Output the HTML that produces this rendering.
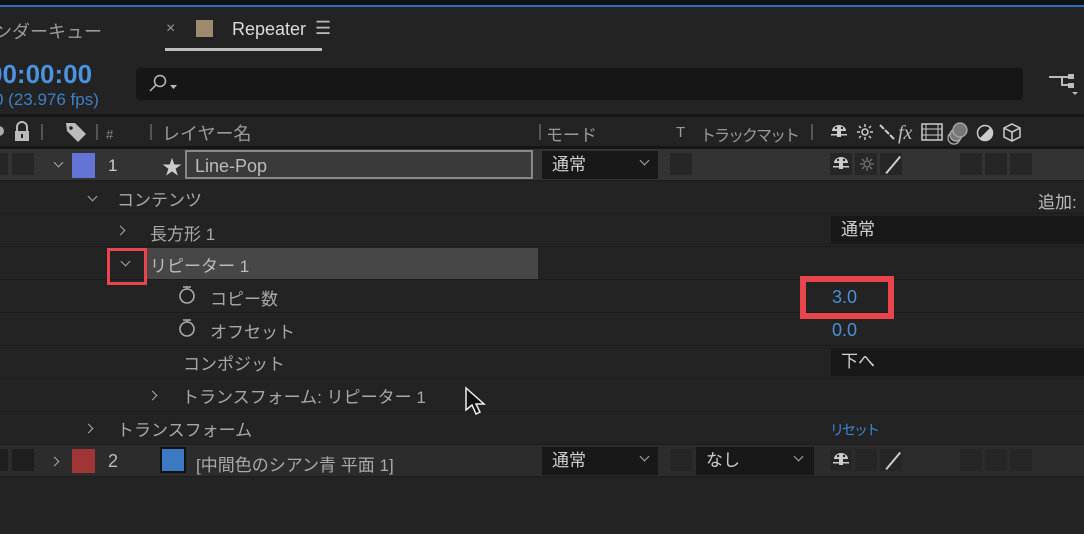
<!DOCTYPE html>
<html><head><meta charset="utf-8"><style>
*{margin:0;padding:0;box-sizing:border-box}
body{width:1084px;height:534px;background:#232323;overflow:hidden;position:relative;font-family:"Liberation Sans","Noto Sans CJK JP",sans-serif;color:#a8a8a8;font-size:17px}
.a{position:absolute}
.row{position:absolute;left:0;width:1084px;height:33px;border-bottom:1px solid #1c1c1c}
.t{position:absolute;white-space:nowrap}
.sq{position:absolute;background:#262626;width:22px;height:22px}
.dd{position:absolute;background:#181818;height:28px;color:#d0d0d0;padding-left:10px;line-height:28px;font-size:17px}
.ch{position:absolute;width:7px;height:7px;border-right:1.5px solid #aaa;border-bottom:1.5px solid #aaa}
.sep{position:absolute;top:124px;width:2px;height:16px;background:#555}
</style></head><body>
<svg width="0" height="0" style="position:absolute"><defs>
<g id="sh"><path d="M3 9a7 6 0 0114 0z" fill="#ccc"/><rect x="8" y="9" width="4" height="6" fill="#ccc"/><rect x="2" y="12" width="16" height="1.5" fill="#ccc"/><circle cx="7" cy="6" r="1.2" fill="#232323"/><circle cx="13" cy="6" r="1.2" fill="#232323"/></g>
<g id="sw"><circle cx="9" cy="11" r="7" fill="none" stroke="#aaa" stroke-width="1.6"/><path d="M5 2h8M9 2v2" stroke="#aaa" stroke-width="1.6"/></g>
</defs></svg>
<div class="a" style="left:0;top:0;width:1084px;height:6px;background:#111"></div>
<div class="a" style="left:0;top:5px;width:1084px;height:2px;background:#2d6fc0"></div>
<div class="t" style="left:-6px;top:18px;font-size:18px;color:#9a9a9a">ンダーキュー</div>
<div class="t" style="left:166px;top:20px;font-size:16px;color:#999">×</div>
<div class="a" style="left:196px;top:20px;width:17px;height:17px;background:#9c8b6c"></div>
<div class="t" style="left:232px;top:19px;font-size:18px;color:#dcdcdc">Repeater</div>
<div class="t" style="left:315px;top:18px;font-size:18px;color:#bbb">☰</div>
<div class="a" style="left:165px;top:48px;width:157px;height:3px;background:#bdbdbd"></div>
<div class="t" style="left:-12px;top:59px;font-size:26px;font-weight:bold;color:#4b92e0">00:00:00</div>
<div class="t" style="left:-6px;top:90px;font-size:17px;color:#3f7fc4">0 (23.976 fps)</div>
<div class="a" style="left:136px;top:68px;width:887px;height:32px;background:#161616;border-radius:4px"></div>
<svg class="a" style="left:146px;top:72px" width="36" height="24"><circle cx="14" cy="9" r="5.5" fill="none" stroke="#bbb" stroke-width="1.5"/><line x1="10" y1="13" x2="4" y2="19" stroke="#bbb" stroke-width="1.5"/><path d="M24 13h7l-3.5 4z" fill="#bbb"/></svg>
<svg class="a" style="left:1048px;top:72px" width="34" height="26"><path d="M1 5h10M11 5h3v8h6M14 5h6" stroke="#bbb" stroke-width="2" fill="none"/><rect x="20" y="2" width="6" height="5" fill="#bbb"/><rect x="20" y="11" width="6" height="5" fill="#bbb"/><path d="M24 20h6l-3 3z" fill="#bbb"/></svg>
<div class="a" style="left:0;top:114px;width:1084px;height:3px;background:#151515"></div>
<div class="a" style="left:0;top:146px;width:1084px;height:3px;background:#151515"></div>
<div class="a" style="left:-6px;top:126px;width:10px;height:10px;border-radius:50%;background:#aaa"></div>
<svg class="a" style="left:12px;top:121px" width="20" height="22"><path d="M5 10V6a5 5 0 0110 0v4" stroke="#bbb" stroke-width="2" fill="none"/><rect x="3" y="10" width="14" height="10" fill="#bbb"/><rect x="9" y="13" width="2" height="4" fill="#232323"/></svg>
<div class="sep" style="left:41px"></div>
<svg class="a" style="left:64px;top:120px" width="24" height="24"><path d="M2 3h9l11 11-8 8L3 11z" fill="#bbb"/><circle cx="7" cy="8" r="1.8" fill="#232323"/></svg>
<div class="sep" style="left:96px"></div>
<div class="t" style="left:106px;top:127px;font-size:13px;color:#888">#</div>
<div class="sep" style="left:150px"></div>
<div class="t" style="left:162px;top:120px;font-size:18px;color:#9a9a9a">レイヤー名</div>
<div class="sep" style="left:539px"></div>
<div class="t" style="left:546px;top:121px;font-size:17px;color:#999">モード</div>
<div class="t" style="left:676px;top:124px;font-size:15px;color:#999">T</div>
<div class="t" style="left:700px;top:122px;font-size:16px;color:#999;letter-spacing:-2px">トラックマット</div>
<div class="sep" style="left:811px"></div>
<svg class="a" style="left:826px;top:120px" width="210" height="26">
<use href="#sh" x="3" y="2"/>
<g stroke="#ccc" stroke-width="1.5" fill="none"><circle cx="39" cy="12" r="3"/><path d="M39 4v3M39 17v3M31 12h3M44 12h3M33 6l2 2M43 16l2 2M33 18l2-2M43 8l2-2"/></g>
<path d="M54 5l4 4M59 10l4 4M64 15l4 4" stroke="#ccc" stroke-width="2"/>
<text x="72" y="19" font-family="Liberation Serif" font-style="italic" font-size="20" fill="#bbb">fx</text>
<rect x="96" y="4" width="20" height="16" fill="none" stroke="#ccc" stroke-width="1.5"/><path d="M96 9h20M96 15h20M100 4v16M112 4v16" stroke="#ccc"/>
<circle cx="128" cy="18" r="6" fill="none" stroke="#aaa" stroke-width="1.3"/><circle cx="130" cy="15" r="6" fill="#777" stroke="#aaa" stroke-width="1.3"/><circle cx="134" cy="10" r="7" fill="#777" stroke="#aaa" stroke-width="1.3"/>
<circle cx="159" cy="13" r="7.5" fill="#232323" stroke="#ccc" stroke-width="1.5"/><path d="M154 18L164 8A7 7 0 0 1 154 18z" fill="#ccc"/>
<path d="M186 4l8 4v9l-8 4-8-4V8zM178 8l8 4 8-4M186 12v9" fill="none" stroke="#ccc" stroke-width="1.5"/>
</svg>
<!-- layer 1 -->
<div class="row" style="top:149px;background:#333;height:32px"></div>
<div class="sq" style="left:0;top:153px;width:8px"></div><div class="sq" style="left:12px;top:153px"></div>
<div class="ch" style="left:55px;top:159px;transform:rotate(45deg)"></div>
<div class="a" style="left:72px;top:153px;width:23px;height:25px;background:#6374d6"></div>
<div class="t" style="left:108px;top:156px;font-size:17px;color:#ccc">1</div>
<div class="t" style="left:162px;top:151px;font-size:20px;color:#ccc">★</div>
<div class="a" style="left:185px;top:150px;width:348px;height:29px;border:2px solid #888;background:#3a3a3a"></div>
<div class="t" style="left:195px;top:156px;font-size:18px;color:#bbb">Line-Pop</div>
<div class="dd" style="left:542px;top:151px;width:116px">通常</div>
<div class="ch" style="left:641px;top:157px;transform:rotate(45deg)"></div>
<div class="sq" style="left:670px;top:153px"></div>
<div class="sq" style="left:830px;top:153px"></div><svg class="a" style="left:831px;top:154px" width="20" height="20"><use href="#sh"/></svg>
<div class="sq" style="left:855px;top:153px"></div>
<svg class="a" style="left:858px;top:155px" width="18" height="18" stroke="#777" stroke-width="1.3" fill="none"><circle cx="9" cy="9" r="3"/><path d="M9 2v3M9 13v3M2 9h3M13 9h3M4 4l2 2M12 12l2 2M4 14l2-2M12 6l2-2"/></svg>
<div class="sq" style="left:880px;top:153px"></div>
<div class="a" style="left:882px;top:164px;width:22px;height:1.5px;background:#ccc;transform:rotate(-50deg)"></div>
<div class="sq" style="left:960px;top:153px"></div><div class="sq" style="left:985px;top:153px"></div><div class="sq" style="left:1010px;top:153px"></div>
<!-- rows -->
<div class="row" style="top:181px"></div>
<div class="ch" style="left:89px;top:193px;transform:rotate(45deg)"></div>
<div class="t" style="left:117px;top:186px">コンテンツ</div>
<div class="t" style="left:1038px;top:188px;color:#bbb">追加:</div>
<div class="row" style="top:214px"></div>
<div class="ch" style="left:117px;top:227px;transform:rotate(-45deg)"></div>
<div class="t" style="left:150px;top:220px">長方形 1</div>
<div class="dd" style="left:831px;top:216px;width:260px">通常</div>
<div class="row" style="top:247px"></div>
<div class="a" style="left:145px;top:248px;width:393px;height:31px;background:#474747"></div>
<div class="a" style="left:107px;top:248px;width:40px;height:37px;border:3px solid #e8454d"></div>
<div class="ch" style="left:122px;top:258px;transform:rotate(45deg)"></div>
<div class="t" style="left:150px;top:252px;color:#bbb">リピーター 1</div>
<div class="row" style="top:280px"></div>
<svg class="a" style="left:178px;top:285px" width="20" height="22"><use href="#sw"/></svg>
<div class="t" style="left:210px;top:285px">コピー数</div>
<div class="a" style="left:800px;top:276px;width:94px;height:43px;border:6px solid #e8454d"></div>
<div class="t" style="left:832px;top:287px;font-size:18px;color:#4b8fdb">3.0</div>
<div class="row" style="top:313px"></div>
<svg class="a" style="left:178px;top:318px" width="20" height="22"><use href="#sw"/></svg>
<div class="t" style="left:210px;top:318px">オフセット</div>
<div class="t" style="left:832px;top:320px;font-size:18px;color:#4b8fdb">0.0</div>
<div class="row" style="top:346px"></div>
<div class="t" style="left:183px;top:350px">コンポジット</div>
<div class="dd" style="left:831px;top:348px;width:260px">下へ</div>
<div class="row" style="top:379px"></div>
<div class="ch" style="left:149px;top:392px;transform:rotate(-45deg)"></div>
<div class="t" style="left:182px;top:383px">トランスフォーム: リピーター 1</div>
<svg class="a" style="left:464px;top:386px" width="24" height="32"><path d="M2 2v22l6-5 4 9 4-2-4-8h8z" fill="#111" stroke="#eee" stroke-width="1.5"/></svg>
<div class="row" style="top:412px"></div>
<div class="ch" style="left:85px;top:425px;transform:rotate(-45deg)"></div>
<div class="t" style="left:117px;top:416px">トランスフォーム</div>
<div class="t" style="left:830px;top:420px;font-size:14px;color:#3f86d8;letter-spacing:-2px">リセット</div>
<!-- layer 2 -->
<div class="row" style="top:445px;background:#2c2c2c;height:32px"></div>
<div class="sq" style="left:0;top:449px;width:8px;background:#1e1e1e"></div><div class="sq" style="left:12px;top:449px;background:#1e1e1e"></div>
<div class="ch" style="left:51px;top:458px;transform:rotate(-45deg)"></div>
<div class="a" style="left:72px;top:449px;width:23px;height:24px;background:#9f3535"></div>
<div class="t" style="left:108px;top:451px;font-size:18px;color:#bbb">2</div>
<div class="a" style="left:160px;top:447px;width:26px;height:26px;background:#3d7ac4;border:2px solid #111"></div>
<div class="t" style="left:196px;top:451px;color:#aaa">[中間色のシアン青 平面 1]</div>
<div class="dd" style="left:542px;top:447px;width:116px">通常</div>
<div class="ch" style="left:641px;top:453px;transform:rotate(45deg)"></div>
<div class="sq" style="left:670px;top:449px"></div>
<div class="dd" style="left:696px;top:447px;width:118px">なし</div>
<div class="ch" style="left:795px;top:453px;transform:rotate(45deg)"></div>
<div class="sq" style="left:830px;top:449px"></div><svg class="a" style="left:831px;top:450px" width="20" height="20"><use href="#sh"/></svg>
<div class="sq" style="left:855px;top:449px"></div>
<div class="sq" style="left:880px;top:449px"></div>
<div class="a" style="left:882px;top:460px;width:22px;height:1.5px;background:#ccc;transform:rotate(-50deg)"></div>
<div class="sq" style="left:960px;top:449px"></div><div class="sq" style="left:985px;top:449px"></div><div class="sq" style="left:1010px;top:449px"></div>
</body></html>
